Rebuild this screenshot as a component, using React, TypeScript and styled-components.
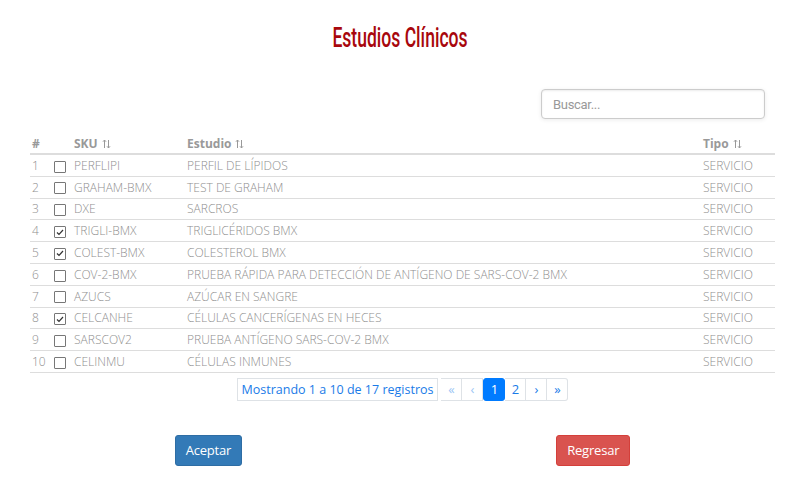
import React from 'react'
import styled, { createGlobalStyle } from 'styled-components'

const GlobalStyle = createGlobalStyle`
  body {
    margin: 0;
    background: #fff;
    font-family: 'Open Sans', 'Liberation Sans', sans-serif;
  }
`

const Page = styled.div`
  display: flex;
  flex-direction: column;
  padding: 22px 27px 0 30px;
`

const Title = styled.h1`
  margin: 0;
  display: flex;
  justify-content: center;
  padding-right: 6px;
  font-family: 'Roboto', 'Liberation Sans', sans-serif;
  font-weight: 500;
  font-size: 27px;
  line-height: 32px;
  color: #a8070d;

  span {
    display: inline-block;
    transform: scaleX(0.65);
    white-space: nowrap;
  }
`

const SearchRow = styled.div`
  display: flex;
  justify-content: flex-end;
  padding: 35px 10px 0 0;
`

const Search = styled.input`
  width: 224px;
  height: 30px;
  box-sizing: border-box;
  border: 1px solid #ccc;
  border-radius: 4px;
  padding: 0 11px;
  font-family: 'Roboto', 'Liberation Sans', sans-serif;
  font-size: 13px;
  letter-spacing: -0.3px;
  color: #555;
  box-shadow: inset 0 1px 2px rgba(0, 0, 0, 0.08), 0 1px 4px rgba(0, 0, 0, 0.08);
  outline: none;

  &::placeholder {
    color: #999;
  }
`

const Table = styled.table`
  margin-top: 14px;
  width: 745px;
  border-collapse: collapse;
  font-size: 12px;
  font-weight: 300;
  color: #8f8f8f;
`

const Th = styled.th<{ w?: number }>`
  width: ${p => (p.w ? `${p.w}px` : 'auto')};
  text-align: left;
  font-weight: 700;
  color: #999;
  padding: 2px 2px 1px;
  height: 15px;
  border-bottom: 2px solid #ddd;
  white-space: nowrap;
`

const Td = styled.td`
  padding: 0 2px;
  height: 20.8px;
  border-bottom: 1px solid #ddd;
  white-space: nowrap;
  text-transform: uppercase;
`

const Box = styled.span`
  display: inline-flex;
  align-items: center;
  justify-content: center;
  box-sizing: border-box;
  width: 12px;
  height: 12px;
  border: 1px solid #777;
  border-radius: 1px;
  margin-left: 2px;
  vertical-align: middle;
`

const Pager = styled.div`
  display: flex;
  justify-content: center;
  margin-top: 5px;
`

const Info = styled.span`
  display: flex;
  align-items: center;
  height: 21px;
  padding: 0 4px;
  border: 1px solid #dee2e6;
  font-size: 12.5px;
  color: #1a7be8;
  margin-right: 3px;
`

const PageBtn = styled.span<{ active?: boolean; muted?: boolean }>`
  display: flex;
  align-items: center;
  justify-content: center;
  min-width: 20px;
  height: 21px;
  border: 1px solid ${p => (p.active ? '#007bff' : '#dee2e6')};
  border-left-width: ${p => (p.active ? '1px' : '0')};
  border-radius: ${p => (p.active ? '3px' : '0')};
  background: ${p => (p.active ? '#007bff' : '#fff')};
  color: ${p => (p.active ? '#fff' : p.muted ? '#9cc6f5' : '#1a7be8')};
  font-size: 13px;

  &:first-of-type {
    border-left-width: 1px;
    border-radius: 3px 0 0 3px;
  }
  &:last-of-type {
    border-radius: 0 3px 3px 0;
  }
`

const Actions = styled.div`
  display: flex;
  justify-content: center;
  gap: 314px;
  margin-top: 34px;
`

const Button = styled.button<{ variant: 'primary' | 'danger' }>`
  height: 31px;
  padding: 0 10px;
  border-radius: 3px;
  border: 1px solid ${p => (p.variant === 'primary' ? '#2e6da4' : '#d43f3a')};
  background: ${p => (p.variant === 'primary' ? '#337ab7' : '#d9534f')};
  color: #fff;
  font-family: 'Open Sans', sans-serif;
  font-size: 13px;
  letter-spacing: -0.2px;
`

const SortIcon = () => (
  <svg width="9" height="10" viewBox="0 0 9 10" style={{ marginLeft: 4, verticalAlign: -1 }}>
    <path d="M2.5 9V1M1 2.7L2.5 1L4 2.7M6.5 1v8M5 7.3L6.5 9L8 7.3" stroke="#999" strokeWidth="1" fill="none" />
  </svg>
)

const Check = () => (
  <svg width="8" height="7" viewBox="0 0 8 7">
    <path d="M1 3.5L3 5.5L7 1" stroke="#333" strokeWidth="1.2" fill="none" />
  </svg>
)

const rows = [
  ['PERFLIPI', 'Perfil de lípidos', false],
  ['GRAHAM-BMX', 'Test de Graham', false],
  ['DXE', 'Sarcros', false],
  ['TRIGLI-BMX', 'Triglicéridos BMX', true],
  ['COLEST-BMX', 'Colesterol BMX', true],
  ['COV-2-BMX', 'Prueba rápida para detección de antígeno de SARS-CoV-2 BMX', false],
  ['AZUCS', 'Azúcar en sangre', false],
  ['CELCANHE', 'Células cancerígenas en heces', true],
  ['SARSCOV2', 'Prueba antígeno SARS-CoV-2 BMX', false],
  ['CELINMU', 'Células inmunes', false],
] as const

const App = () => {
  return (
    <Page>
      <GlobalStyle />
      <Title>
        <span>Estudios Clínicos</span>
      </Title>
      <SearchRow>
        <Search placeholder="Buscar..." />
      </SearchRow>
      <Table>
        <thead>
          <tr>
            <Th w={16}>#</Th>
            <Th w={18}></Th>
            <Th w={109}>SKU<SortIcon /></Th>
            <Th>Estudio<SortIcon /></Th>
            <Th w={70}>Tipo<SortIcon /></Th>
          </tr>
        </thead>
        <tbody>
          {rows.map(([sku, name, checked], i) => (
            <tr key={sku}>
              <Td>{i + 1}</Td>
              <Td>
                <Box>{checked && <Check />}</Box>
              </Td>
              <Td>{sku}</Td>
              <Td>{name}</Td>
              <Td>Servicio</Td>
            </tr>
          ))}
        </tbody>
      </Table>
      <Pager>
        <Info>Mostrando 1 a 10 de 17 registros</Info>
        <PageBtn muted>«</PageBtn>
        <PageBtn muted>‹</PageBtn>
        <PageBtn active>1</PageBtn>
        <PageBtn>2</PageBtn>
        <PageBtn>›</PageBtn>
        <PageBtn>»</PageBtn>
      </Pager>
      <Actions>
        <Button variant="primary">Aceptar</Button>
        <Button variant="danger">Regresar</Button>
      </Actions>
    </Page>
  )
}

export default App
